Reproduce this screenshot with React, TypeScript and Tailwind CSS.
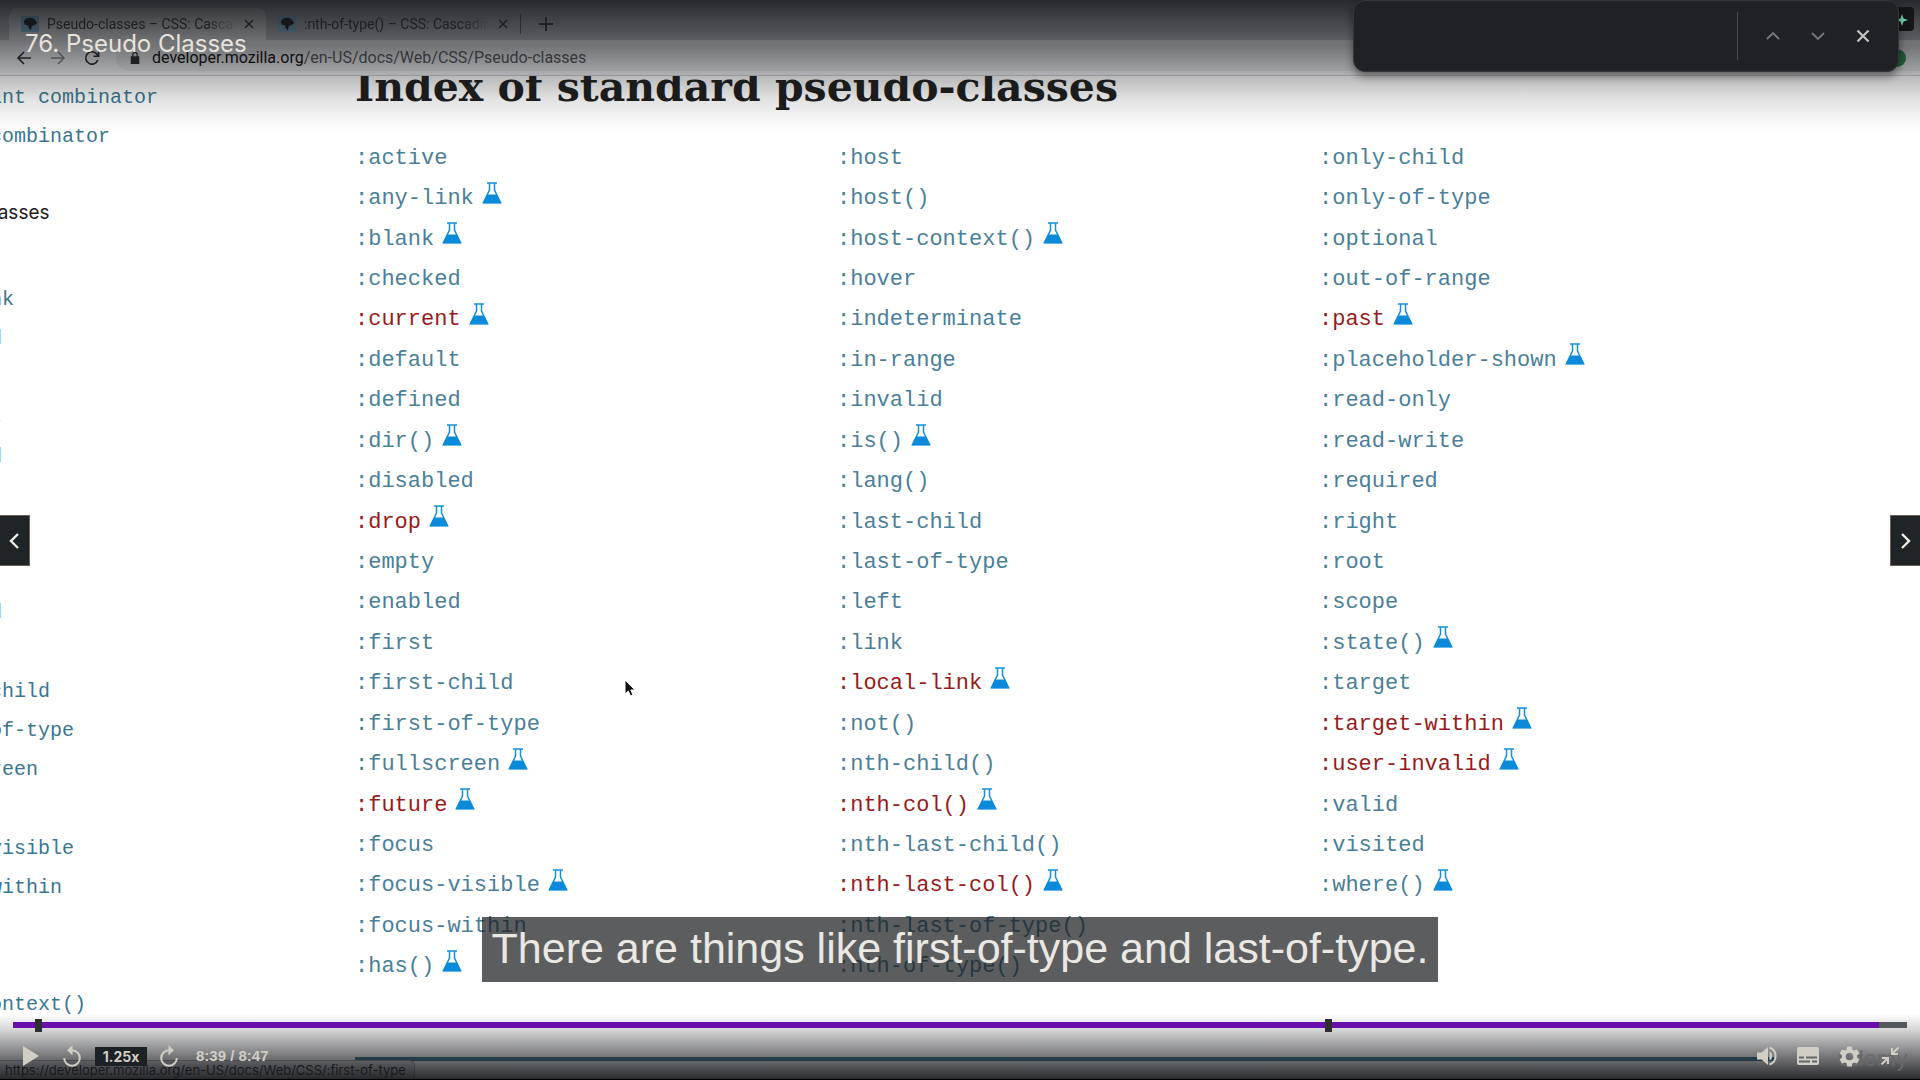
import React from "react";

const MONO = "font-['Liberation_Mono',monospace]";

type Entry = { name: string; flask?: boolean; missing?: boolean };

const e = (name: string, flask = false, missing = false): Entry => ({ name, flask, missing });

const COLUMNS: Entry[][] = [
  [
    e(":active"), e(":any-link", true), e(":blank", true), e(":checked"), e(":current", true, true),
    e(":default"), e(":defined"), e(":dir()", true), e(":disabled"), e(":drop", true, true),
    e(":empty"), e(":enabled"), e(":first"), e(":first-child"), e(":first-of-type"),
    e(":fullscreen", true), e(":future", true, true), e(":focus"), e(":focus-visible", true),
    e(":focus-within"), e(":has()", true),
  ],
  [
    e(":host"), e(":host()"), e(":host-context()", true), e(":hover"), e(":indeterminate"),
    e(":in-range"), e(":invalid"), e(":is()", true), e(":lang()"), e(":last-child"),
    e(":last-of-type"), e(":left"), e(":link"), e(":local-link", true, true), e(":not()"),
    e(":nth-child()"), e(":nth-col()", true, true), e(":nth-last-child()"),
    e(":nth-last-col()", true, true), e(":nth-last-of-type()"), e(":nth-of-type()"),
  ],
  [
    e(":only-child"), e(":only-of-type"), e(":optional"), e(":out-of-range"), e(":past", true, true),
    e(":placeholder-shown", true), e(":read-only"), e(":read-write"), e(":required"), e(":right"),
    e(":root"), e(":scope"), e(":state()", true), e(":target"), e(":target-within", true, true),
    e(":user-invalid", true, true), e(":valid"), e(":visited"), e(":where()", true),
  ],
];

const SIDEBAR = [
  ":active", ":any-link", ":checked", ":blank", ":default", ":defined", ":dir()", ":disabled",
  ":empty", ":enabled", ":first", ":first-child", ":first-of-type", ":fullscreen", ":focus",
  ":focus-visible", ":focus-within", ":has()", ":host", ":host-context()",
];

function Flask() {
  return (
    <svg viewBox="0 0 20 22" className="mb-3 ml-2 h-[22px] w-5" aria-hidden="true">
      <path d="M5 1h10M7.5 1v7L1.5 20.5h17L12.5 8V1" fill="none" stroke="#1490dc" strokeWidth="1.5" />
      <path d="M5.2 12.5h9.6L19.5 21.5H.5z" fill="#0a8ad8" />
    </svg>
  );
}

function Favicon() {
  return (
    <span className="flex h-4 w-[18px] shrink-0 items-center justify-center bg-[#83d0f2]">
      <svg viewBox="0 0 18 18" className="size-4" aria-hidden="true">
        <path d="M2 6c1-2 3-4 7-4 4 0 6 2 8 6l-3 2.500-3 .5-1 5-3-3 .5-2L3 9.500z" fill="#000" />
      </svg>
    </span>
  );
}

function Cross({ className }: { className: string }) {
  return (
    <svg viewBox="0 0 10 10" className={className} fill="none" stroke="currentColor" strokeWidth="1.5" aria-hidden="true">
      <path d="M1 1l8 8M9 1L1 9" />
    </svg>
  );
}

function Tab({ title, active }: { title: string; active?: boolean }) {
  return (
    <div
      className={
        active
          ? "flex h-8 w-[257px] items-center rounded-t-lg bg-[#f4f5f7] px-3"
          : "flex h-8 w-[254px] items-center px-3"
      }
    >
      <Favicon />
      <span className="ml-2 flex-1 overflow-hidden text-sm whitespace-nowrap text-[#202124] [mask-image:linear-gradient(to_right,black_85%,transparent)]">
        {title}
      </span>
      <button type="button" aria-label={"Close " + title} className="ml-2 text-[#202124]">
        <Cross className="size-[10px]" />
      </button>
    </div>
  );
}

function BrowserChrome() {
  return (
    <header className="font-[Roboto,sans-serif]">
      <div className="flex h-10 items-end bg-[#c4c6cb] pl-[9px]">
        <Tab title="Pseudo-classes – CSS: Cascading" active />
        <Tab title=":nth-of-type() – CSS: Cascading" />
        <span className="mb-[6px] h-5 w-px bg-[#50545a]" />
        <button type="button" aria-label="New tab" className="mb-[9px] ml-[18px] text-[#202124]">
          <svg viewBox="0 0 14 14" className="size-[14px]" fill="none" stroke="currentColor" strokeWidth="1.800" aria-hidden="true">
            <path d="M7 0v14M0 7h14" />
          </svg>
        </button>
      </div>
      <div className="flex h-9 items-center border-b border-[#d0d0d2] bg-[#f4f5f7]">
        <nav className="flex items-center pl-4" aria-label="Browser">
          <button type="button" aria-label="Back" className="text-[#202124]">
            <svg viewBox="0 0 16 16" className="size-4" fill="none" stroke="currentColor" strokeWidth="1.6" aria-hidden="true">
              <path d="M15 8H2M8 2L2 8l6 6" />
            </svg>
          </button>
          <button type="button" aria-label="Forward" className="ml-[18px] text-[#80868b]">
            <svg viewBox="0 0 16 16" className="size-4" fill="none" stroke="currentColor" strokeWidth="1.6" aria-hidden="true">
              <path d="M1 8h13M8 2l6 6-6 6" />
            </svg>
          </button>
          <button type="button" aria-label="Reload" className="ml-[18px] text-[#202124]">
            <svg viewBox="0 0 16 16" className="size-4" fill="none" stroke="currentColor" strokeWidth="1.6" aria-hidden="true">
              <path d="M13.800 10A6.200 6.200 0 1 1 12.400 3.600L14.500 6M14.600 1v5.200H9.500" />
            </svg>
          </button>
        </nav>
        <div className="ml-4 flex h-[27px] flex-1 items-center rounded-l-full bg-[#e6e8ea] pl-[14px]">
          <svg viewBox="0 0 10 14" className="h-[12px] w-[10px]" aria-hidden="true">
            <path d="M0 5h10v9H0z" fill="#202124" />
            <path d="M2.500 6V3a2.500 2.500 0 0 1 5 0v3" fill="none" stroke="#202124" strokeWidth="1.5" />
          </svg>
          <span className="ml-3 text-base text-[#4a4d52]">
            <span className="text-black">developer.mozilla.org</span>
            /en-US/docs/Web/CSS/Pseudo-classes
          </span>
        </div>
      </div>
    </header>
  );
}

function Sidebar() {
  return (
    <nav aria-label="Related topics" className={"-ml-[94px] w-[449px] shrink-0 pt-[2px] text-xl text-[#3a7690] " + MONO}>
      <a href="#descendant" className="block h-[39px] leading-[39px]">Descendant combinator</a>
      <a href="#column" className="block h-[39px] leading-[39px]">Column combinator</a>
      <p className="mt-[37px] h-[39px] font-[Inter,sans-serif] text-[19px] leading-[39px] text-[#1b1b1b]">Pseudo-classes</p>
      <ul className="mt-[9px] grid h-[784px] auto-rows-fr">
        {SIDEBAR.map((name) => (
          <li key={name} className="flex items-center">
            <a href={"#side" + name}>{name}</a>
          </li>
        ))}
      </ul>
    </nav>
  );
}

function Index() {
  return (
    <main className="flex-1">
      <h2 className="-mt-[14px] font-['DejaVu_Serif',serif] text-[41px] leading-[50px] font-bold whitespace-nowrap text-[#1b1b1b]">
        Index of standard pseudo-classes
      </h2>
      <div className={"mt-[26px] grid h-[849px] grid-cols-3 pr-[119px] text-[22px] text-[#4a7f99] " + MONO}>
        {COLUMNS.map((column, i) => (
          <ul key={i} className="grid grid-rows-[repeat(21,minmax(0,1fr))]">
            {column.map((item) => (
              <li key={item.name} className="flex items-center">
                <a href={"#" + item.name} className={item.missing ? "text-[#981b1b]" : ""}>
                  {item.name}
                </a>
                {item.flask && <Flask />}
              </li>
            ))}
          </ul>
        ))}
      </div>
      <hr className="mt-[70px] mr-[146px] border-t-4 border-[#2f6f8c]" />
    </main>
  );
}

function FindBar() {
  return (
    <div className="absolute top-0 right-[21px] flex h-[72px] w-[546px] items-center rounded-xl border border-[#35363a] bg-[#202124] shadow-[0_4px_8px_rgba(0,0,0,0.45)]">
      <input type="text" aria-label="Find in page" className="h-full min-w-0 flex-1 bg-transparent px-5 text-white outline-none" />
      <span className="h-12 w-px bg-[#4a4b4f]" />
      <div className="flex w-[160px] items-center justify-between px-7">
        <button type="button" aria-label="Previous match" className="text-[#77787c]">
          <svg viewBox="0 0 14 14" className="size-[14px]" fill="none" stroke="currentColor" strokeWidth="1.800" aria-hidden="true"><path d="M1 10l6-6 6 6" /></svg>
        </button>
        <button type="button" aria-label="Next match" className="text-[#77787c]">
          <svg viewBox="0 0 14 14" className="size-[14px]" fill="none" stroke="currentColor" strokeWidth="1.800" aria-hidden="true"><path d="M1 4l6 6 6-6" /></svg>
        </button>
        <button type="button" aria-label="Close find bar" className="text-[#c4c5c7]">
          <Cross className="size-[14px]" />
        </button>
      </div>
    </div>
  );
}

function Marker({ at }: { at: number }) {
  return <span className="absolute -top-[3px] h-[13px] w-[7px] bg-[#2d2f31]" style={{ left: at + "%" }} />;
}

function Controls() {
  return (
    <div className="absolute inset-x-0 bottom-0 px-3 pb-3 text-[#d1cec6]">
      <div className="relative mx-px h-[6px] bg-[#53585a]">
        <div className="h-full bg-[#6a0dad]" style={{ width: "98.5%" }} />
        <Marker at={1.15} />
        <Marker at={69.25} />
        <input type="range" aria-label="Seek" min={0} max={527} defaultValue={519} className="absolute inset-0 h-full w-full cursor-pointer opacity-0" />
      </div>
      <div className="mt-4 flex h-6 items-center">
        <button type="button" aria-label="Play" className="ml-[11px]">
          <svg viewBox="0 0 16 20" className="h-5 w-4" aria-hidden="true"><path d="M0 0l16 10L0 20z" fill="currentColor" /></svg>
        </button>
        <button type="button" aria-label="Rewind 5 seconds" className="ml-6">
          <svg viewBox="0 0 18 22" className="h-[22px] w-[18px]" aria-hidden="true">
            <path d="M1.200 13A7.800 7.800 0 1 0 9 5.200" fill="none" stroke="currentColor" strokeWidth="2" />
            <path d="M9.500 0v10.400L4.200 5.200z" fill="currentColor" />
          </svg>
        </button>
        <button type="button" className="ml-[14px] h-[19px] w-[52px] bg-[#1b2125] font-[Inter,sans-serif] text-sm leading-[17px] font-bold">1.25x</button>
        <button type="button" aria-label="Forward 5 seconds" className="ml-[13px]">
          <svg viewBox="0 0 18 22" className="h-[22px] w-[18px]" aria-hidden="true">
            <path d="M16.800 13A7.800 7.800 0 1 1 9 5.200" fill="none" stroke="currentColor" strokeWidth="2" />
            <path d="M8.500 0v10.400l5.300-5.200z" fill="currentColor" />
          </svg>
        </button>
        <span className="ml-[18px] font-['Liberation_Sans',sans-serif] text-[15px] font-bold">8:39 / 8:47</span>
        <span className="flex-1" />
        <button type="button" aria-label="Mute">
          <svg viewBox="0 0 20 20" className="size-5" aria-hidden="true">
            <path d="M0 6.500h4.500L11 1v18l-6.500-5.500H0z" fill="currentColor" />
            <path d="M12.500 5.500a5 5 0 0 1 0 9z" fill="currentColor" />
            <path d="M12.500 1.500a9 9 0 0 1 0 17" fill="none" stroke="currentColor" strokeWidth="2" />
          </svg>
        </button>
        <button type="button" aria-label="Captions" className="ml-5">
          <svg viewBox="0 0 22 18" className="h-[18px] w-[22px]" aria-hidden="true">
            <rect width="22" height="18" rx="2" fill="currentColor" />
            <path d="M2 10.500h5M9 10.500h11M2 14.500h11M15 14.500h5" stroke="#66676a" strokeWidth="1.800" />
          </svg>
        </button>
        <button type="button" aria-label="Settings" className="ml-5">
          <svg viewBox="2 2 20 20" className="size-[21px]" aria-hidden="true">
            <path fill="currentColor" d="M19.140 12.940c.04-.3.060-.61.060-.94s-.02-.64-.07-.94l2.030-1.580a.49.490 0 0 0 .12-.61l-1.920-3.320a.49.490 0 0 0-.59-.22l-2.390.96a7 7 0 0 0-1.620-.94l-.36-2.540A.48.480 0 0 0 13.920 2.400h-3.840a.48.480 0 0 0-.47.410l-.36 2.540c-.59.240-1.130.57-1.620.94l-2.390-.96a.48.480 0 0 0-.59.220L2.740 8.870a.48.480 0 0 0 .12.610l2.030 1.580c-.05.3-.09.630-.09.940s.02.640.07.940l-2.030 1.580a.49.490 0 0 0-.12.610l1.920 3.320c.12.220.37.290.59.220l2.390-.96c.5.380 1.030.7 1.620.94l.36 2.540c.05.240.24.410.48.410h3.840c.24 0 .44-.17.47-.41l.36-2.540a7 7 0 0 0 1.620-.94l2.390.96c.22.080.47 0 .59-.22l1.920-3.320a.48.480 0 0 0-.12-.61zM12 15.600a3.600 3.600 0 1 1 0-7.200 3.600 3.600 0 0 1 0 7.200z" />
          </svg>
        </button>
        <button type="button" aria-label="Exit full screen" className="mr-[9px] ml-[21px]">
          <svg viewBox="0 0 18 18" className="size-[18px]" fill="none" stroke="currentColor" strokeWidth="2" aria-hidden="true">
            <path d="M17.500.5L11.500 6.500M11 1v6h6M.5 17.500l6-6M7 17v-6H1" />
          </svg>
        </button>
      </div>
    </div>
  );
}

export default function App() {
  return (
    <div className="relative h-screen overflow-hidden bg-white">
      <div className="relative z-10">
        <BrowserChrome />
      </div>
      <div className="flex">
        <Sidebar />
        <Index />
      </div>
      <p className="absolute bottom-0 left-0 rounded-tr-md border-t border-r border-[#a0a0a0] bg-[#dfe1e5] pr-2 pb-px pl-[5px] text-[13px] leading-[18px] text-black font-[Inter,sans-serif]">
        https://developer.mozilla.org/en-US/docs/Web/CSS/:first-of-type
      </p>
      <svg viewBox="0 0 12 18" className="absolute top-[679px] left-[624px] h-[18px] w-3" aria-hidden="true">
        <path d="M1 1v14l3.300-3 2.200 5 2.500-1-2.200-5H11z" fill="#111" stroke="#fff" />
      </svg>
      <div className="absolute top-[49px] right-[14px] z-10 size-[18px] rounded-full bg-[#1e8e3e]" />
      <div className="absolute inset-x-0 top-0 z-10 h-[134px] bg-[linear-gradient(to_bottom,rgb(28_29_32/0.93)_0%,rgb(28_29_32/0.62)_30%,rgb(28_29_32/0.31)_57%,rgb(28_29_32/0.13)_74%,rgb(28_29_32/0.05)_87%,transparent_100%)]" />
      <div className="absolute top-[7px] right-[6px] z-10 flex h-6 w-9 items-center justify-center rounded-sm bg-[#141517]">
        <svg viewBox="0 0 16 16" className="ml-3 size-4" aria-hidden="true">
          <path d="M8 3l1.500 4.500L14 9l-4.500 1.500L8 15l-1.500-4.500L2 9l4.500-1.500zM3 0l.6 2 1.900.6-1.900.6L3 5l-.6-1.800L.5 2.600 2.400 2z" fill="#6fd3b0" />
        </svg>
      </div>
      <div className="absolute inset-x-0 bottom-0 h-[66px] border-b border-black bg-[linear-gradient(to_bottom,transparent_0%,rgb(28_29_33/0.18)_24%,rgb(28_29_33/0.6)_65%,rgb(28_29_33/0.94)_100%)]" />
      <p className="absolute right-3 bottom-[10px] font-[Inter,sans-serif] text-[22px] leading-6 text-[#68696b]">udemy</p>
      <h1 className="absolute top-7 left-[25px] z-20 font-[Inter,sans-serif] text-2xl leading-8 text-[#e6e3dc]">76. Pseudo Classes</h1>
      <div className="absolute inset-x-0 bottom-[98px] flex justify-center">
        <p className="bg-[#17181b]/70 px-[10px] pb-[2px] font-['Liberation_Sans',sans-serif] text-[43px] leading-[63px] whitespace-nowrap text-[#eae8e3]">
          There are things like first-of-type and last-of-type.
        </p>
      </div>
      <button type="button" aria-label="Previous lecture" className="absolute top-[515px] left-0 flex h-[51px] w-[30px] items-center justify-center border border-l-0 border-[#6a6058] bg-[#1f2427] pr-[2px] text-[#f0eee8]">
        <svg viewBox="0 0 10 16" className="h-4 w-[10px]" fill="none" stroke="currentColor" strokeWidth="2.400" aria-hidden="true"><path d="M9 1L2 8l7 7" /></svg>
      </button>
      <button type="button" aria-label="Next lecture" className="absolute top-[515px] right-0 flex h-[51px] w-[30px] items-center justify-center border border-r-0 border-[#6a6058] bg-[#1f2427] text-[#f0eee8]">
        <svg viewBox="0 0 10 16" className="h-4 w-[10px]" fill="none" stroke="currentColor" strokeWidth="2.400" aria-hidden="true"><path d="M1 1l7 7-7 7" /></svg>
      </button>
      <Controls />
      <div className="absolute inset-x-0 top-0 z-20">
        <FindBar />
      </div>
    </div>
  );
}
